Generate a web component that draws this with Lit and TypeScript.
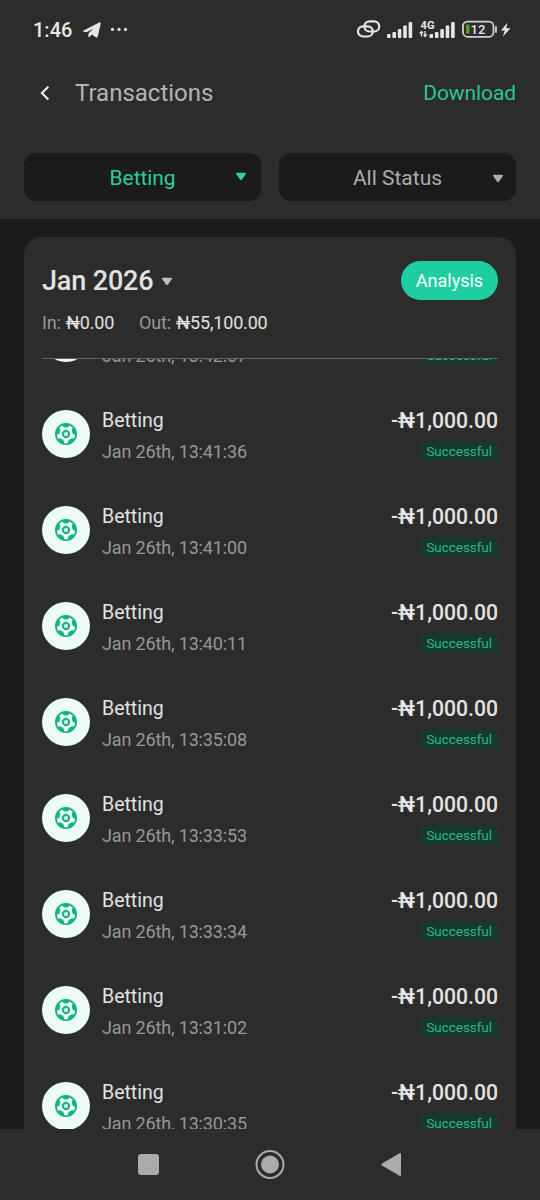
import { LitElement, html, svg, css } from "lit";
import { customElement, property } from "lit/decorators.js";

interface Transaction {
  title: string;
  date: string;
  amount: string;
  status: string;
}

const times = [
  "13:42:07",
  "13:41:36",
  "13:41:00",
  "13:40:11",
  "13:35:08",
  "13:33:53",
  "13:33:34",
  "13:31:02",
  "13:30:35",
];

const transactions: Transaction[] = times.map((time) => ({
  title: "Betting",
  date: `Jan 26th, ${time}`,
  amount: "-₦1,000.00",
  status: "Successful",
}));

const caret = html`<svg class="caret" width="12" height="9" viewBox="0 0 12 9">
  <path d="M1.7 .8H10.3Q11.6 .9 10.9 2.1L7 7.5Q6 8.6 5 7.5L1.1 2.1Q.4 .9 1.7 .8Z" fill="currentColor" />
</svg>`;

@customElement("status-bar")
class StatusBar extends LitElement {
  static styles = css`
    :host {
      display: flex;
      align-items: center;
      height: 60px;
      padding: 0 28px 0 33px;
      box-sizing: border-box;
      color: #e6e6e6;
    }
    .time {
      font-size: 20px;
      font-weight: 500;
      line-height: 24px;
      width: 49px;
    }
    .spacer {
      flex: 1;
    }
    svg {
      display: block;
    }
    .net {
      font: 700 10.5px Roboto, sans-serif;
    }
    .level {
      font: 500 13px Roboto, sans-serif;
    }
  `;
  render() {
    const bars = (x: number) =>
      [0, 1, 2, 3, 4].map((i) => {
        const h = [4, 6, 9, 12.5, 16][i];
        return svg`<rect x=${x + i * 5.4} y=${28 - h} width="3.6" height=${h} rx="1" fill="currentColor" />`;
      });
    return html`
      <span class="time">1:46</span>
      <svg width="50" height="20" viewBox="0 0 50 20">
        <path d="M1.5 10.5 17.2 2.4Q19 1.8 18.7 3.7L15.8 16.5Q15.3 18 13.8 17.2L9.8 14.5 7.6 17Q6.5 17.7 6.4 16.2V13.4L11.5 8.6 4.8 12.2 1.6 11.7Q.1 11.3 1.5 10.5Z" fill="currentColor" />
        <circle cx="30.5" cy="9.4" r="1.6" fill="currentColor" />
        <circle cx="37" cy="9.4" r="1.6" fill="currentColor" />
        <circle cx="43.5" cy="9.4" r="1.6" fill="currentColor" />
      </svg>
      <span class="spacer"></span>
      <svg width="156" height="40" viewBox="0 0 156 40">
        <g fill="none" stroke="currentColor" stroke-width="2.2">
          <rect x="8.4" y="11.3" width="14.8" height="10.2" rx="5.1" />
          <rect x="2" y="16.3" width="14.8" height="10.2" rx="5.1" />
        </g>
        ${bars(31)}
        <text class="net" x="64.5" y="18.5" textLength="14" lengthAdjust="spacingAndGlyphs" fill="currentColor">4G</text>
        <path d="M65.5 26.5V22M63.7 23.6 65.5 21.4 67 23.2M69 21V26M67.6 24.5 69 26.5 70.8 24.3" fill="none" stroke="currentColor" stroke-width="1.3" />
        ${bars(73.5)}
        <rect x="107" y="11.6" width="30.5" height="15.2" rx="4.5" fill="none" stroke="#cfcfcf" stroke-width="1.8" />
        <rect x="110" y="14.4" width="3.6" height="9.4" rx="1.2" fill="#4f9e2a" />
        <path d="M140 17V22" stroke="#cfcfcf" stroke-width="1.8" stroke-linecap="round" />
        <text class="level" x="114.5" y="23.9" textLength="15" fill="currentColor">12</text>
        <path d="M151.6 12.5 145 20.6H148.9L146.8 26.8 154.5 18.2H150.2Z" fill="currentColor" />
      </svg>
    `;
  }
}

@customElement("transaction-row")
class TransactionRow extends LitElement {
  @property({ attribute: false }) item!: Transaction;

  static styles = css`
    :host {
      display: flex;
      height: 96px;
      flex: none;
      box-sizing: border-box;
      padding-top: 20px;
    }
    .icon {
      width: 48px;
      height: 48px;
      margin: 4px 12px 0 0;
      border-radius: 50%;
      background: #ebfdf6;
      display: grid;
      place-items: center;
    }
    .info {
      flex: 1;
      padding-top: 1px;
    }
    .title {
      font-size: 19.5px;
      line-height: 28px;
      color: #e2e2e2;
    }
    .date {
      font-size: 18px;
      letter-spacing: -0.15px;
      line-height: 24px;
      margin-top: 5px;
      color: #979797;
    }
    .side {
      display: flex;
      flex-direction: column;
      align-items: flex-end;
    }
    .amount {
      font-size: 21.2px;
      font-weight: 500;
      line-height: 29px;
      color: #e4e4e4;
    }
    .status {
      margin-top: 6px;
      font-size: 13.5px;
      letter-spacing: -0.05px;
      line-height: 20px;
      height: 19px;
      padding: 0 6px;
      border-radius: 4px;
      color: #2db888;
      background: #173a2e;
    }
  `;
  render() {
    const angles = [0, 72, 144, 216, 288];
    return html`
      <div class="icon">
        <svg width="24" height="24" viewBox="0 0 24 24">
          <circle cx="12" cy="12" r="10.1" fill="none" stroke="#17b384" stroke-width="1.9" />
          ${angles.map(
            (a) => svg`<path transform="rotate(${a} 12 12)" d="M7.8 2.2Q12 .4 16.2 2.2L15 4.6Q14.2 5.6 12 5.6T9 4.6Z" fill="#17b384" />`,
          )}
          <circle cx="12" cy="12" r="3.1" fill="none" stroke="#17b384" stroke-width="2.1" />
        </svg>
      </div>
      <div class="info">
        <div class="title">${this.item.title}</div>
        <div class="date">${this.item.date}</div>
      </div>
      <div class="side">
        <div class="amount">${this.item.amount}</div>
        <div class="status">${this.item.status}</div>
      </div>
    `;
  }
}

@customElement("app-root")
class AppRoot extends LitElement {
  static styles = css`
    :host {
      display: flex;
      flex-direction: column;
      height: 1200px;
      overflow: hidden;
      background: #1b1b1b;
      font-family: Roboto, sans-serif;
      color: #e2e2e2;
    }
    svg {
      display: block;
    }
    .top {
      height: 219px;
      flex: none;
      background: #2c2c2c;
    }
    .header {
      display: flex;
      align-items: center;
      height: 66px;
      padding: 0 24px 0 39px;
    }
    .heading {
      flex: 1;
      margin-left: 24px;
      font-size: 24px;
      color: #b4b4b4;
    }
    .download {
      font-size: 21px;
      letter-spacing: -0.1px;
      color: #2dc596;
    }
    .filters {
      display: grid;
      grid-template-columns: 1fr 1fr;
      gap: 18px;
      padding: 27px 24px 0;
    }
    .filter {
      display: flex;
      align-items: center;
      height: 48px;
      box-sizing: border-box;
      padding: 2px 12px 0 13px;
      border-radius: 12px;
      background: #1b1b1b;
      color: #acacac;
      font-size: 21px;
    }
    .filter .label {
      flex: 1;
      text-align: center;
      padding-left: 11px;
    }
    .filter.active {
      color: #2dcd9d;
    }
    .filter.active .label {
      padding-left: 13px;
      letter-spacing: -0.1px;
    }
    .filter.active .caret {
      margin: 0 2px 3px 0;
    }
    .card {
      flex: 1;
      min-height: 0;
      display: flex;
      flex-direction: column;
      margin: 18px 24px 0;
      padding: 0 18px;
      border-radius: 18px 18px 0 0;
      background: #2c2c2c;
    }
    .month-row {
      display: flex;
      align-items: center;
      justify-content: space-between;
      padding-top: 24px;
      height: 39px;
    }
    .month {
      display: flex;
      align-items: center;
      gap: 8px;
      font-size: 27px;
      letter-spacing: -0.15px;
      font-weight: 500;
      padding-top: 1px;
    }
    .month .caret {
      color: #bdbdbd;
    }
    .analysis {
      width: 97px;
      height: 39px;
      line-height: 39px;
      border-radius: 20px;
      background: #1fcea0;
      color: #fff;
      text-align: center;
      font-size: 18px;
    }
    .totals {
      display: flex;
      gap: 25px;
      padding: 10px 0 23px;
      line-height: 25px;
      font-size: 18px;
      letter-spacing: -0.18px;
      color: #979797;
    }
    .total {
      display: flex;
      gap: 5px;
    }
    .sum {
      color: #e2e2e2;
    }
    .list {
      flex: 1;
      min-height: 0;
      overflow: hidden;
      border-top: 1px solid #646464;
    }
    .scrolled {
      margin-top: -69px;
    }
    .nav {
      height: 71px;
      flex: none;
      background: #2c2c2c;
      display: flex;
      justify-content: center;
    }
  `;
  render() {
    return html`
      <div class="top">
        <status-bar></status-bar>
        <div class="header">
          <svg width="12" height="18" viewBox="0 0 12 18">
            <path d="M9.3 2.8 2.9 9.1 9.3 15.4" fill="none" stroke="#f2f2f2" stroke-width="2.1" />
          </svg>
          <div class="heading">Transactions</div>
          <div class="download">Download</div>
        </div>
        <div class="filters">
          <div class="filter active"><span class="label">Betting</span>${caret}</div>
          <div class="filter"><span class="label">All Status</span>${caret}</div>
        </div>
      </div>
      <div class="card">
        <div class="month-row">
          <div class="month">Jan 2026 ${caret}</div>
          <div class="analysis">Analysis</div>
        </div>
        <div class="totals">
          <div class="total"><span>In:</span><span class="sum">₦0.00</span></div>
          <div class="total"><span>Out:</span><span class="sum">₦55,100.00</span></div>
        </div>
        <div class="list">
          <div class="scrolled">
            ${transactions.map((t) => html`<transaction-row .item=${t}></transaction-row>`)}
          </div>
        </div>
      </div>
      <div class="nav">
        <svg width="270" height="71" viewBox="0 0 270 71">
          <rect x="3" y="25" width="21" height="21" rx="3" fill="#ababab" />
          <circle cx="135" cy="35.5" r="13.5" fill="none" stroke="#ababab" stroke-width="2" />
          <circle cx="135" cy="35.5" r="9" fill="#ababab" />
          <path d="M264.5 24.2Q266 23.5 266 25V46Q266 47.5 264.5 46.8L247 36.5Q245.6 35.5 247 34.5Z" fill="#ababab" />
        </svg>
      </div>
    `;
  }
}
